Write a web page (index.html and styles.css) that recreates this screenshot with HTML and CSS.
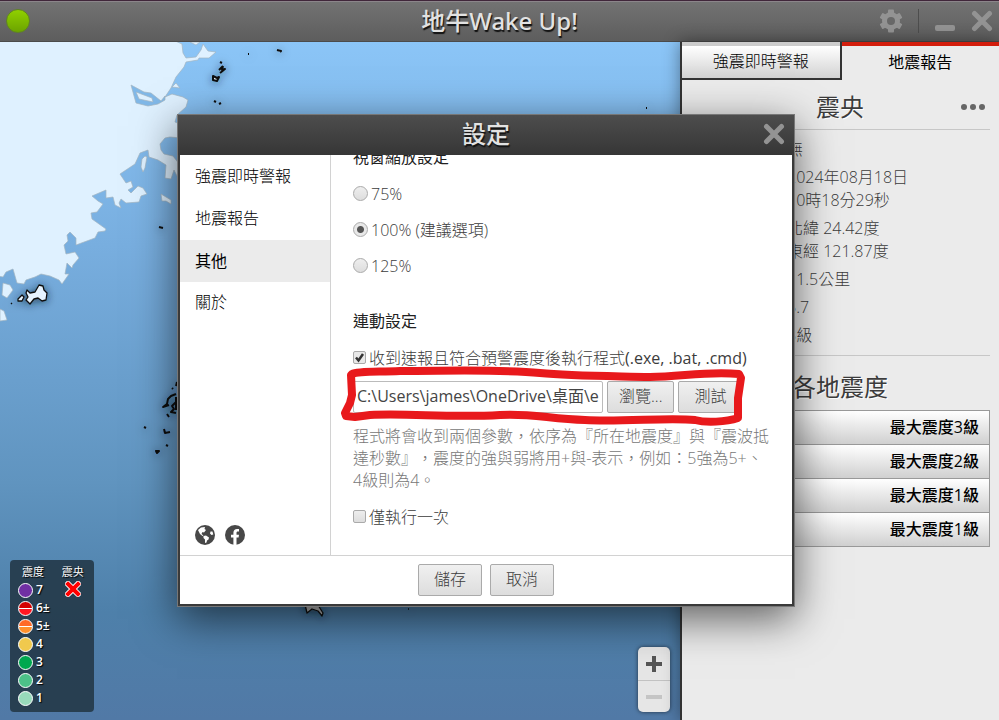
FILE: index.html
```html
<!DOCTYPE html>
<html lang="zh-Hant">
<head>
<meta charset="utf-8">
<title>地牛Wake Up!</title>
<link rel="stylesheet" href="styles.css">
</head>
<body>
<header class="titlebar">
  <span class="status"></span>
  <h1>地牛Wake Up!</h1>
  <div class="window-tools">
    <button class="tool" aria-label="設定"><svg width="24" height="24" viewBox="0 0 24 24"><g fill="#939393"><circle cx="12" cy="12" r="9"/><g><rect x="9" y="0.5" width="6" height="23" rx="1"/><rect x="9" y="0.5" width="6" height="23" rx="1" transform="rotate(60 12 12)"/><rect x="9" y="0.5" width="6" height="23" rx="1" transform="rotate(120 12 12)"/></g></g><circle cx="12" cy="12" r="4" fill="#686868"/></svg></button>
    <span class="divider"></span>
    <button class="tool" aria-label="最小化"><svg width="22" height="22" viewBox="0 0 22 22"><rect x="1" y="15" width="20" height="6" rx="2" fill="#939393"/></svg></button>
    <button class="tool" aria-label="關閉"><svg width="22" height="22" viewBox="0 0 22 22"><path d="M3.500 3.500 18.500 18.500M18.500 3.500 3.500 18.500" stroke="#939393" stroke-width="5" stroke-linecap="round"/></svg></button>
  </div>
</header>
<main class="workspace">
  <section class="map" aria-label="地圖">
    <svg class="map-art" viewBox="0 42 680 678" preserveAspectRatio="xMinYMin slice">
      <defs>
        <linearGradient id="sea" x1="0" y1="0" x2="0" y2="1">
          <stop offset="0" stop-color="#8bc5f7"/>
          <stop offset=".3" stop-color="#78aedf"/>
          <stop offset=".5" stop-color="#6a9fcd"/>
          <stop offset=".65" stop-color="#6094bf"/>
          <stop offset=".84" stop-color="#4e80aa"/>
          <stop offset="1" stop-color="#5179a6"/>
        </linearGradient>
        <filter id="halo" x="-100%" y="-100%" width="300%" height="300%"><feDropShadow dx="0" dy="1" stdDeviation="4" flood-color="#123" flood-opacity=".7"/></filter>
      </defs>
      <rect y="42" width="680" height="678" fill="url(#sea)"/>
      <g fill="#dff1ff" stroke="#a3b4c0" stroke-width=".7">
        <path d="M-2 40H173L182 44 183 53 186 58 196 57 201 50 203 44 208 51 216 52 209 58 199 58 198 60 186 62 184 67 176 77 171 88 165 97 172 94 183 97 188 100 186 107 177 115 175 122 180 124V138L170 137 165 138 160 144 161 150 164 154 173 156 180 165V182L174 170 171 179 165 178 166 165 158 160 149 157 148 150 140 153 135 164 120 174 126 183 131 181 133 187 128 190 131 193 138 186 143 188 147 194 141 196 139 202 126 203 121 199 119 203 121 208 115 205 113 197 106 198 106 190 92 196 98 201 103 204 97 212 91 213 92 219 106 229 105 231 98 232 95 238 76 245 76 238 70 232 67 235 68 241 64 245 66 254 75 252 79 258 73 265 72 268 67 263 65 274 69 274 62 284 59 280 50 276 41 274 35 277 26 280 24 284 17 283 13 269 6 272 3 277-2 276Z"/>
        <path d="M190 42 196 45 200 42ZM172 87 176 83 180 88ZM161 194 171 200 171 204 166 201 162 201ZM3 283 10 285 13 290 7 298 2 295ZM0 309 4 311 7 320 0 321Z"/>
        <path d="M131 85 144 92 151 93 161 101 165 96 165 100 158 104 148 106 136 103Z" fill="#80b8e8"/>
        <path d="M136 92 152 98 153 102 139 99ZM145 156 147 157 145 168 143 172 141 167 142 159Z"/>
      </g>
      <g filter="url(#halo)" fill="#e6f4ff" stroke="#111" stroke-width="1.300" stroke-linejoin="round">
        <path d="M27 290 30 293 35 292 39 285 43 286 44 290 47 293 46 300 42 301 38 298 34 299 30 304 26 300 28 297 26 293ZM18 299 22 295 24 297 22 301 18 301ZM11 303 12 304"/>
        <path d="M220 62 222 63M223 66 222 70 225 69 220 73M223 66 219 70M213 76 217 78 219 77 217 81 213 80ZM214 101 216 102M219 104 221 103" stroke-width="2"/>
        <path d="M277 50 281 51 280 52M248 54 249 54M646 108 647 108M159 227 163 228" stroke-width="2"/>
        <path d="M177 382 176 386M172 388 173 389M176 394 171 396 168 399 167 404 163 407 169 405M176 402 172 406 174 409 171 412 176 413M167 414 169 417M164 429 165 433 170 432M144 427 146 428M156 451 159 451 157 453ZM166 445 168 446M176 397V410" fill="none" stroke-width="2"/>
        <path d="M304 600 307 613 312 609 318 611 322 616 323 613 318 605ZM408 609 409 609" fill="#bbb"/>
      </g>
    </svg>
    <aside class="legend">
      <div>
        <h2>震度</h2>
        <ul>
          <li><i class="dot i7"></i>7</li>
          <li><i class="dot split i6"></i>6±</li>
          <li><i class="dot split i5"></i>5±</li>
          <li><i class="dot i4"></i>4</li>
          <li><i class="dot i3"></i>3</li>
          <li><i class="dot i2"></i>2</li>
          <li><i class="dot i1"></i>1</li>
        </ul>
      </div>
      <div>
        <h2>震央</h2>
        <svg width="16" height="16" viewBox="0 0 16 16"><path d="M3 3 13 13M13 3 3 13" stroke="#fff" stroke-width="6" stroke-linecap="round"/><path d="M3 3 13 13M13 3 3 13" stroke="#f00" stroke-width="4" stroke-linecap="square"/></svg>
      </div>
    </aside>
    <div class="zoom">
      <button aria-label="放大"><svg width="16" height="16"><path d="M8 0V16M0 8H16" stroke="#555" stroke-width="4"/></svg></button>
      <button aria-label="縮小" disabled><svg width="16" height="16"><path d="M0 8H16" stroke="#c5c5c5" stroke-width="4"/></svg></button>
    </div>
  </section>
  <aside class="report">
    <nav class="tabs">
      <button class="tab">強震即時警報</button>
      <button class="tab current">地震報告</button>
    </nav>
    <div class="report-body">
      <div class="report-head">
        <h2>震央</h2>
        <button class="more" aria-label="更多"><svg width="26" height="8"><g fill="#666"><circle cx="4" cy="4" r="3"/><circle cx="13" cy="4" r="3"/><circle cx="22" cy="4" r="3"/></g></svg></button>
      </div>
      <ul class="facts">
        <li>無</li>
        <li>2024年08月18日<br>10時18分29秒</li>
        <li>北緯 24.42度<br>東經 121.87度</li>
        <li>11.5公里</li>
        <li>5.7</li>
        <li>3級</li>
      </ul>
      <h2 class="areas-title">各地震度</h2>
      <div class="areas">
        <button>最大震度3級</button>
        <button>最大震度2級</button>
        <button>最大震度1級</button>
        <button>最大震度1級</button>
      </div>
    </div>
  </aside>
</main>
<div class="overlay">
  <div class="dialog" role="dialog" aria-labelledby="dialog-title">
    <header class="dialog-head">
      <h2 id="dialog-title">設定</h2>
      <button class="tool" aria-label="關閉設定"><svg width="22" height="22" viewBox="0 0 22 22"><path d="M3.500 3.500 18.500 18.500M18.500 3.500 3.500 18.500" stroke="#939393" stroke-width="5" stroke-linecap="round"/></svg></button>
    </header>
    <div class="dialog-main">
      <nav class="side">
        <a href="#alert">強震即時警報</a>
        <a href="#report">地震報告</a>
        <a href="#other" class="current">其他</a>
        <a href="#about">關於</a>
        <div class="social">
          <a href="#web" aria-label="網站"><svg width="20" height="20" viewBox="0 0 20 20"><circle cx="10" cy="10" r="10" fill="#484848"/><path d="M3 5 6 2.500 10 2 9.500 4 11 5 9 7.500 7.500 7 6.500 9 8.500 10.500 7.500 11 5 9ZM8.500 11 11 10.500 14 12.500 13.500 14.500 12 15.500 11.500 17.500 10 18 10 14.500 8.500 13ZM15.500 6.500 17.500 6.500 18.300 9.500 16.500 10 15 8.500Z" fill="#fff"/></svg></a>
          <a href="#facebook" aria-label="Facebook"><svg width="20" height="20" viewBox="0 0 20 20"><circle cx="10" cy="10" r="10" fill="#484848"/><path d="M8.400 20V12.500H6V9.700H8.400V7.700C8.400 5.200 9.900 3.900 12 3.900L14 4.100V6.500H12.800C11.700 6.500 11.500 7.200 11.500 7.900V9.700H14L13.600 12.500H11.500V20Z" fill="#fff"/></svg></a>
        </div>
      </nav>
      <form class="panel">
        <h3 class="first">視窗縮放設定</h3>
        <div class="choices">
          <label><input type="radio" name="scale">75%</label>
          <label><input type="radio" name="scale" checked>100% (建議選項)</label>
          <label><input type="radio" name="scale">125%</label>
        </div>
        <h3>連動設定</h3>
        <label class="check"><input type="checkbox" checked>收到速報且符合預警震度後執行程式<span class="ext">(.exe, .bat, .cmd)</span></label>
        <div class="path-row">
          <input class="path" type="text" aria-label="程式路徑" value="C:\Users\james\OneDrive\桌面\e">
          <button type="button" class="btn">瀏覽...</button>
          <button type="button" class="btn">測試</button>
          <svg class="marker" width="408" height="60" viewBox="340 366 408 60"><path d="M352 374C358 371 375 372 400 371 450 371 500 369 540 373 570 376 610 376 650 377 685 376 710 371 739 374L741 378 738 398 738 418C726 422 706 423 695 420 670 417 625 422 585 420 550 419 530 413 500 415 450 418 410 413 370 415L355 417 346 416 345 413 350 403 352 395 351 375Z" fill="none" stroke="#e8191c" stroke-width="8" stroke-linejoin="round"/></svg>
        </div>
        <p>程式將會收到兩個參數，依序為『所在地震度』與『震波抵達秒數』，震度的強與弱將用+與-表示，例如：5強為5+、4級則為4。</p>
        <label class="check"><input type="checkbox">僅執行一次</label>
      </form>
    </div>
    <footer class="dialog-foot">
      <button class="btn">儲存</button>
      <button class="btn">取消</button>
    </footer>
  </div>
</div>
</body>
</html>
```
FILE: styles.css
```css
* { box-sizing: border-box; }
body, button, input {
  font-family: "Open Sans", "Noto Sans CJK TC", sans-serif;
  font-size: 16px;
  font-weight: 300;
}
body {
  margin: 0;
  height: 100vh;
  display: flex;
  flex-direction: column;
  overflow: hidden;
  color: #3c3c3c;
  line-height: 22px;
}
h1, h2, h3, p, ul { margin: 0; padding: 0; }
ul { list-style: none; }
svg { display: block; }
button { color: inherit; cursor: pointer; }

.titlebar {
  height: 42px;
  flex: none;
  display: grid;
  grid-template-columns: 1fr auto 1fr;
  align-items: center;
  padding: 0 6px;
  border-top: 1px solid #40263a;
  border-bottom: 1px solid #4b4b4b;
  background: linear-gradient(#737373, #5d5d5d);
  box-shadow: inset 0 1px #8b858a;
}
.titlebar h1, .dialog-head h2 {
  color: #e2e2e2;
  font-family: "Noto Sans", "Noto Sans CJK TC", sans-serif;
  font-size: 24px;
  font-weight: 500;
  line-height: 32px;
  text-shadow: 1px 2px 1px #111;
}
.status {
  width: 24px;
  height: 24px;
  border-radius: 50%;
  border: 1px solid #5f8520;
  background: linear-gradient(#90d000, #6ca400);
}
.window-tools {
  display: flex;
  justify-content: flex-end;
  align-items: center;
  gap: 15px;
}
.tool { padding: 0; border: 0; background: none; }
.divider { width: 1px; height: 24px; background: #4d4d4d; }

.workspace { flex: 1; display: flex; min-height: 0; }
.map { flex: 1; position: relative; overflow: hidden; }
.map-art { width: 100%; height: 100%; }
.legend {
  position: absolute;
  left: 10px;
  bottom: 8px;
  display: flex;
  gap: 12px;
  padding: 3px 10px 5px 8px;
  border-radius: 4px;
  background: #243848e6;
  color: #fff;
  font-size: 12px;
  line-height: 18px;
  text-shadow: 1px 1px 1px #000;
}
.legend h2 { font-size: 11px; font-weight: 400; line-height: 18px; padding-left: 4px; }
.legend > div:last-child h2 { padding: 0; }
.legend svg { margin: 0 auto; }
.legend li { display: flex; align-items: center; gap: 3px; font-weight: 600; }
.dot { width: 15px; height: 15px; border-radius: 50%; border: 1px solid #fff; }
.i7 { background: #702fa3; }
.i6 { background: linear-gradient(#d40000 45%, #fff 45% 55%, #ff1722 55%); }
.i5 { background: linear-gradient(#ff6a28 45%, #fff 45% 55%, #ff902d 55%); }
.i4 { background: #f0c94d; }
.i3 { background: #00a84f; }
.i2 { background: #4cc188; }
.i1 { background: #98dabb; }
.zoom {
  position: absolute;
  right: 10px;
  bottom: 8px;
  width: 32px;
  border-radius: 5px;
  overflow: hidden;
  background: #e6e6e6;
  box-shadow: 0 0 4px #0009;
}
.zoom button {
  display: grid;
  place-items: center;
  width: 100%;
  height: 33px;
  padding: 0;
  border: 0;
  background: none;
}
.zoom button + button { height: 32px; border-top: 1px solid #c2c2c2; }

.report {
  position: relative;
  width: 319px;
  border-left: 2px solid #333;
  background: #ebebeb;
  box-shadow: 0 0 16px #0006;
}
.tabs { display: flex; height: 38px; }
.tab {
  flex: 1;
  padding: 0;
  border: solid #333;
  border-width: 0 2px 2px 0;
  background: linear-gradient(#ccc 4px, #fff 4px, #d2d2d2);
  color: #000;
}
.tab.current { padding-bottom: 4px; border: 0; border-top: 4px solid #d31d0c; background: none; font-weight: 400; }
.report-body { padding: 4px 9px 0 8px; }
.report-head { display: grid; grid-template-columns: 1fr auto 1fr; align-items: center; height: 46px; border-bottom: 1px solid #c7c7c7; }
.report h2 { font-size: 24px; font-weight: 400; line-height: 32px; text-shadow: 1px 1px #fff; }
.report-head h2 { grid-column: 2; }
.more { justify-self: end; padding: 4px; border: 0; background: none; }
.facts {
  display: flex;
  flex-direction: column;
  gap: 5px;
  padding: 8px 0 8px 97px;
  line-height: 23px;
  border-bottom: 1px solid #c7c7c7;
}
.areas-title { padding: 15px 0 7px; text-align: center; }
.areas button {
  display: block;
  width: 100%;
  height: 35px;
  margin-bottom: -1px;
  padding: 0 10px 3px;
  border: 1px solid #999;
  background: linear-gradient(#fff, #d0d0d0);
  color: #000;
  font-weight: 500;
  text-align: right;
}

.overlay {
  position: fixed;
  inset: 0;
  display: grid;
  place-items: center;
  padding-right: 27px;
}
.dialog {
  width: 618px;
  border: 1px solid #777;
  background: #3a3a3a;
  box-shadow: 0 12px 40px #0009;
}
.dialog-head {
  display: grid;
  grid-template-columns: 1fr auto 1fr;
  align-items: center;
  height: 40px;
  padding: 0 9px 1px;
  background: linear-gradient(#4d4d4d, #363636);
}
.dialog-head h2 { grid-column: 2; }
.dialog-head .tool { justify-self: end; }
.dialog-main { display: flex; height: 400px; margin: 0 2px; background: #fff; }
.side { width: 151px; display: flex; flex-direction: column; padding-top: 1px; border-right: 1px solid #d2d2d2; }
.side > a { padding: 9px 15px 11px; color: #000; text-decoration: none; line-height: 22px; }
.side > a.current { padding: 10px 15px; background: #ebebeb; font-weight: 400; }
.social { display: flex; gap: 10px; margin-top: auto; padding: 0 15px 10px; }
.panel { flex: 1; min-width: 0; padding: 0 22px; overflow: hidden; }
.panel h3 { color: #222; font-size: 16px; font-weight: 400; line-height: 22px; }
.panel .first { margin-top: -9px; }
.choices { display: grid; gap: 14px; padding: 15px 0 33px; }
.panel label { display: flex; align-items: center; }
.panel label input { appearance: none; flex: none; margin: 0 3px 0 0; border: 1px solid #aaa; background: linear-gradient(#eee, #ddd); }
.panel input[type="radio"] { width: 15px; height: 15px; border-radius: 50%; }
.panel input[type="radio"]:checked { background: radial-gradient(circle, #555 3px, #e8e8e8 4px); }
.panel input[type="checkbox"] { width: 13px; height: 13px; border-radius: 2px; }
.panel input[type="checkbox"]:checked {
  background: #e8e8e8 url("data:image/svg+xml,%3Csvg xmlns='http://www.w3.org/2000/svg' viewBox='0 0 11 11'%3E%3Cpath d='M2 5.500 4.500 8.500 9 2' fill='none' stroke='%23333' stroke-width='2.500'/%3E%3C/svg%3E");
}
.panel .check { margin-top: 15px; white-space: nowrap; }
.ext { font-weight: 400; }
.path-row { position: relative; display: flex; gap: 4px; margin-top: 12px; }
.path { width: 250px; height: 32px; padding: 0 3px 3px; border: 1px solid #bbb; border-radius: 2px; color: #444; font-weight: 400; }
.btn {
  height: 32px;
  min-width: 64px;
  padding: 0 11px 3px;
  border: 1px solid #aaa;
  border-radius: 2px;
  background: linear-gradient(#f0f0f0, #ddd);
}
.marker { position: absolute; left: -13px; top: -15px; pointer-events: none; }
.panel p { margin-top: 12px; color: #777; width: 418px; text-spacing-trim: space-all; }
.dialog-foot {
  display: flex;
  justify-content: center;
  gap: 8px;
  margin: 0 2px 2px;
  padding: 8px;
  border-top: 1px solid #d2d2d2;
  background: #fff;
}
```
